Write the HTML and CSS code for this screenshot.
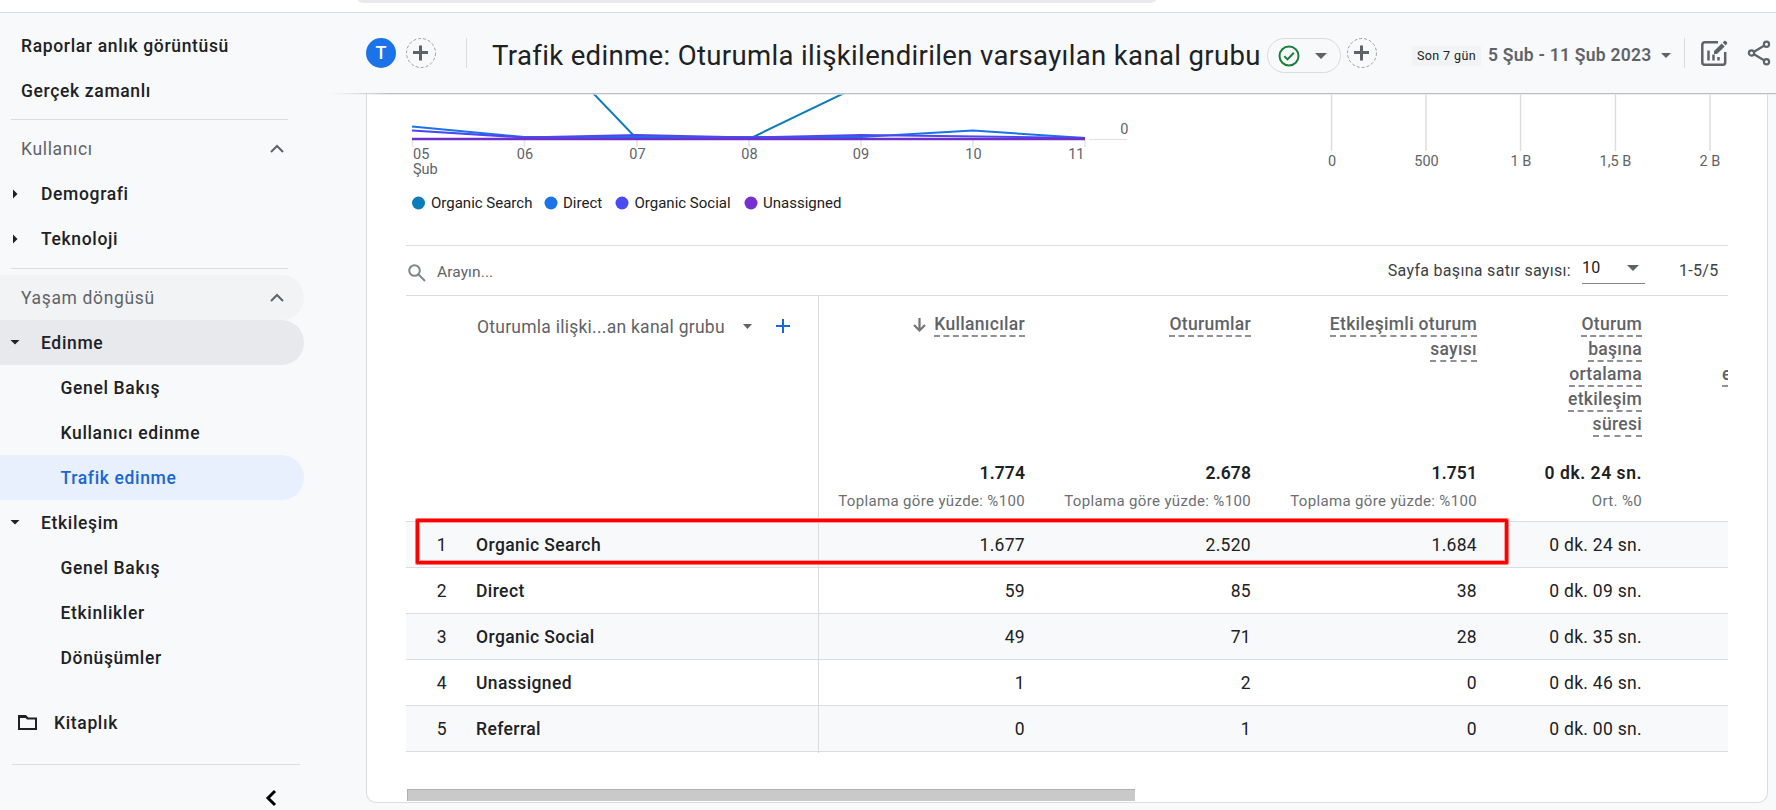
FILE: index.html
```html
<!DOCTYPE html>
<html lang="tr">
<head>
<meta charset="utf-8">
<title>Trafik edinme</title>
<link rel="stylesheet" href="styles.css">
</head>
<body>
<div class="topbar"><div class="topsearch"></div></div>
<div class="shell">
  <nav class="sidebar">
    <a class="item">Raporlar anlık görüntüsü</a>
    <a class="item">Gerçek zamanlı</a>
    <hr class="rule">
    <div class="item section">Kullanıcı<svg class="chev" width="14" height="9" viewBox="0 0 14 9"><path d="M1 8l6-6 6 6"/></svg></div>
    <a class="item group"><svg class="tri" width="10" height="10"><path d="M3 .5v9l4.500-4.500z"/></svg>Demografi</a>
    <a class="item group"><svg class="tri" width="10" height="10"><path d="M3 .5v9l4.500-4.500z"/></svg>Teknoloji</a>
    <hr class="rule second">
    <div class="item section hover">Yaşam döngüsü<svg class="chev" width="14" height="9" viewBox="0 0 14 9"><path d="M1 8l6-6 6 6"/></svg></div>
    <a class="item group open"><svg class="tri" width="10" height="10"><path d="M.5 2h9l-4.500 4.500z"/></svg>Edinme</a>
    <a class="item sub">Genel Bakış</a>
    <a class="item sub">Kullanıcı edinme</a>
    <a class="item sub active">Trafik edinme</a>
    <a class="item group"><svg class="tri" width="10" height="10"><path d="M.5 2h9l-4.500 4.500z"/></svg>Etkileşim</a>
    <a class="item sub">Genel Bakış</a>
    <a class="item sub">Etkinlikler</a>
    <a class="item sub">Dönüşümler</a>
    <a class="item library"><svg width="20" height="16" viewBox="0 0 20 16"><path d="M1 2h7l1.500 1.500H18V14H1z" fill="none" stroke="#202124" stroke-width="2"/><path d="M0 0h8l2.500 3H0z" fill="#202124"/></svg>Kitaplık</a>
    <hr class="rule foot">
    <svg class="collapse" width="12" height="18" viewBox="0 0 12 18"><path d="M10 2L3 9l7 7"/></svg>
  </nav>
  <div class="content">
    <header class="header">
      <span class="avatar">T</span>
      <svg class="add" width="30" height="30" viewBox="0 0 30 30"><circle cx="15" cy="15" r="14.500"/><path d="M14.500 7.500v15M7 14.500h15"/></svg>
      <span class="vsep first"></span>
      <h1 class="title">Trafik edinme: Oturumla ilişkilendirilen varsayılan kanal grubu</h1>
      <span class="status">
        <svg width="22" height="22" viewBox="0 0 22 22"><circle cx="11" cy="11" r="9.500"/><path d="M6.300 11.200l3.200 3.200 6.300-6.600"/></svg>
        <svg class="caret" width="12" height="6"><path d="M0 0h12L6 6z"/></svg>
      </span>
      <svg class="add second" width="30" height="30" viewBox="0 0 30 30"><circle cx="15" cy="15" r="14.500"/><path d="M14.500 7.500v15M7 14.500h15"/></svg>
      <span class="chip">Son 7 gün</span>
      <span class="date">5 Şub - 11 Şub 2023</span>
      <svg class="caret datecaret" width="10" height="5"><path d="M0 0h10L5 5z"/></svg>
      <span class="vsep second"></span>
      <svg class="report" width="27" height="27" viewBox="0 0 27 27"><path d="M17 2.300H4Q1.300 2.300 1.300 5v17.500q0 2.200 2.200 2.200h18.500q2.200 0 2.200-2.200V12" fill="none" stroke="#5f6368" stroke-width="2.500"/><path d="M7.500 10.500v10M12.500 14.500v6M17.500 17v3.500" stroke="#5f6368" stroke-width="2.500"/><path d="M13 11L20.700 3.500l3 3L16 14h-3zM21.700 2.500L23.200 1q.8-.6 1.500 0L26 2.300q.7.700 0 1.500L24.600 5.400z" fill="#5f6368"/></svg>
      <svg class="share" width="24" height="26" viewBox="0 0 24 26"><g fill="none" stroke="#5f6368" stroke-width="2.200"><circle cx="4.500" cy="13" r="2.600"/><circle cx="19.500" cy="4.300" r="2.600"/><circle cx="19.500" cy="21.700" r="2.600"/><path d="M7 11.700l10-5.900M7 14.300l10 5.900"/></g></svg>
    </header>
    <main class="card">
      <svg class="charts" width="1400" height="151" viewBox="367 93 1400 151">
        <path d="M1089 139.500h38" stroke="#e0e0e0"/>
        <path d="M412.500 140v7M524.500 140v7M637 140v7M749 140v7M861 140v7M973 140v7M1085 140v7" stroke="#e4e4e6" stroke-width="1.500"/>
        <path d="M1331.500 93v58M1426 93v58M1520.500 93v58M1615.500 93v58M1710 93v58" stroke="#dadce0" stroke-width="1.400"/>
        <g fill="none" stroke-width="2">
          <path d="M524 21L637 139H749L861 85" stroke="#0c7db8"/>
          <path d="M412 126.500L524 137H861L973 130.500 1085 138" stroke="#1a73e8"/>
          <path d="M412 130.500L524 137.500 637 135 749 137.500 861 135 1085 138" stroke="#4b49f0"/>
          <path d="M412 139H1085" stroke="#6f2fc9" stroke-width="2.600"/>
        </g>
        <g class="axis">
          <text x="413" y="159">05</text><text x="413" y="174">Şub</text>
          <g text-anchor="middle"><text x="525" y="159">06</text><text x="637.500" y="159">07</text><text x="749.500" y="159">08</text><text x="861" y="159">09</text><text x="973.500" y="159">10</text></g>
          <g text-anchor="end"><text x="1084.500" y="159">11</text><text x="1128.500" y="134">0</text></g>
          <g text-anchor="middle"><text x="1332" y="166">0</text><text x="1426.500" y="166">500</text><text x="1521" y="166">1 B</text><text x="1615.500" y="166">1,5 B</text><text x="1710" y="166">2 B</text></g>
        </g>
        <g class="legend">
          <circle cx="418.500" cy="203" r="6.500" fill="#0c7db8"/><text x="431" y="208">Organic Search</text>
          <circle cx="551" cy="203" r="6.500" fill="#1a73e8"/><text x="563" y="208">Direct</text>
          <circle cx="622" cy="203" r="6.500" fill="#4b49f0"/><text x="634.500" y="208">Organic Social</text>
          <circle cx="751" cy="203" r="6.500" fill="#7630cf"/><text x="763" y="208">Unassigned</text>
        </g>
      </svg>
      <section class="report-table">
        <div class="tools">
          <svg class="lens" width="18" height="18" viewBox="0 0 18 18"><circle cx="6.500" cy="6.500" r="5.300"/><path d="M10.500 10.500l6.500 6.500"/></svg>
          <span class="find">Arayın...</span>
          <span class="perpage">Sayfa başına satır sayısı:</span>
          <span class="select">10<svg class="caret" width="12" height="6"><path d="M0 0h12L6 6z"/></svg></span>
          <span class="range">1-5/5</span>
        </div>
        <div class="row head">
          <div class="dim"><span>Oturumla ilişki...an kanal grubu</span><svg class="caret" width="9" height="5"><path d="M0 0h9L4.500 5z"/></svg><svg class="plus" width="14" height="14"><path d="M7 0v14M0 7h14"/></svg></div>
          <div class="th"><svg class="sort" width="13" height="14" viewBox="0 0 13 14"><path d="M6.500 0v12M1 7l5.500 5.500L12 7"/></svg><span>Kullanıcılar</span></div>
          <div class="th"><span>Oturumlar</span></div>
          <div class="th"><span>Etkileşimli oturum</span><br><span>sayısı</span></div>
          <div class="th time"><span>Oturum</span><br><span>başına</span><br><span>ortalama</span><br><span>etkileşim</span><br><span>süresi</span></div>
          <div class="th next"><span>e</span></div>
          <div class="total c2"><b>1.774</b><small>Toplama göre yüzde: %100</small></div>
          <div class="total"><b>2.678</b><small>Toplama göre yüzde: %100</small></div>
          <div class="total"><b>1.751</b><small>Toplama göre yüzde: %100</small></div>
          <div class="total time"><b>0 dk. 24 sn.</b><small>Ort. %0</small></div>
        </div>
        <div class="row shade"><div class="name"><i>1</i>Organic Search</div><div>1.677</div><div>2.520</div><div>1.684</div><div class="time">0 dk. 24 sn.</div><span class="marker"></span></div>
        <div class="row"><div class="name"><i>2</i>Direct</div><div>59</div><div>85</div><div>38</div><div class="time">0 dk. 09 sn.</div></div>
        <div class="row shade"><div class="name"><i>3</i>Organic Social</div><div>49</div><div>71</div><div>28</div><div class="time">0 dk. 35 sn.</div></div>
        <div class="row"><div class="name"><i>4</i>Unassigned</div><div>1</div><div>2</div><div>0</div><div class="time">0 dk. 46 sn.</div></div>
        <div class="row shade"><div class="name"><i>5</i>Referral</div><div>0</div><div>1</div><div>0</div><div class="time">0 dk. 00 sn.</div></div>
        <div class="scrollbar"></div>
      </section>
    </main>
  </div>
</div>
</body>
</html>
```
FILE: styles.css
```css
* { box-sizing: border-box; }
body { margin: 0; width: 1776px; height: 810px; overflow: hidden; background: #f8f9fb; color: #202124; font: 400 17.5px Roboto, sans-serif; }
svg { display: block; flex: none; }

.topbar { height: 13px; background: #fff; border-bottom: 1px solid #dadce0; padding-left: 358px; }
.topsearch { width: 798px; height: 3px; background: #e9eaee; border-radius: 0 0 6px 6px / 0 0 3px 3px; }
.shell { display: flex; height: 797px; }

.sidebar { width: 330px; flex: none; padding-top: 10px; }
.item { display: flex; align-items: center; width: 304px; height: 45px; padding-left: 21px; border-radius: 0 22.5px 22.5px 0; font-weight: 500; letter-spacing: .65px; }
.section { color: #5f6368; font-weight: 400; justify-content: space-between; padding-right: 20px; }
.chev { fill: none; stroke: #5f6368; stroke-width: 2; }
.group { padding-left: 10px; gap: 21px; }
.tri { fill: #202124; }
.sub { padding-left: 60.5px; }
.hover { background: #f1f3f4; }
.open { background: #e8e9ed; }
.active { background: #e8effd; color: #1967d2; }
.rule { width: 277px; height: 1px; margin: 6px 0 6px 11px; border: 0; background: #dadce0; }
.rule.second { margin-top: 7px; }
.library { margin-top: 20px; padding-left: 18px; gap: 16px; }
.rule.foot { width: 288px; margin: 19px 0 0 12px; }
.collapse { margin: 24px 0 0 265px; fill: none; stroke: #000; stroke-width: 3; }

.content { flex: 1; min-width: 0; display: flex; flex-direction: column; }
.header { position: relative; display: flex; align-items: flex-start; height: 80px; flex: none; padding: 25px 0 0 36px; }
.header::after { content: ""; position: absolute; left: 0; right: 0; top: 80px; height: 2px; background: linear-gradient(#bdbfc3 0 1px, #e2e3e5aa 1px); mask-image: linear-gradient(90deg, transparent, #000 60px); }
.avatar { width: 30px; height: 30px; border-radius: 50%; background: #1a73e8; color: #fff; text-align: center; font-weight: 500; line-height: 30px; font-size: 18px; }
.add { margin-left: 10px; fill: none; stroke: #5f6368; stroke-width: 3; }
.add circle { stroke: #9aa0a6; stroke-width: 1; stroke-dasharray: 3 2; }
.add.second { margin-left: 6px; }
.vsep { width: 1px; height: 30px; background: #dadce0; }
.vsep.first { margin-left: 30px; }
.vsep.second { margin-left: 13px; }
.title { width: 775px; margin: 0 0 0 25px; font-size: 27.5px; font-weight: 400; line-height: 36px; letter-spacing: .36px; white-space: nowrap; }
.status { display: flex; align-items: center; width: 74px; height: 35px; padding-left: 10px; gap: 15px; border: 1px solid #dadce0; border-radius: 18px; }
.status svg { fill: none; stroke: #188038; stroke-width: 2; }
.caret, .status .caret { fill: #5f6368; stroke: none; }
.chip { width: 69px; height: 20px; margin: 8px 0 0 35px; background: #f1f3f4; font-size: 12.5px; line-height: 20px; letter-spacing: .4px; text-align: center; white-space: nowrap; }
.date { width: 172px; margin-left: 7px; margin-right: 1px; color: #5f6368; font-weight: 600; line-height: 35px; letter-spacing: .25px; white-space: nowrap; }
.datecaret { margin-top: 15px; }
.report { margin: 2px 0 0 16px; }
.share { margin: 2px 0 0 19px; }

.card { width: 1402px; height: 710px; margin-left: 36px; background: #fff; border: 1px solid #dadce0; border-top: 0; border-radius: 0 0 10px 10px; }
.charts text { font-size: 15px; }
.charts .axis text { font-size: 14.5px; }
.axis { fill: #5f6368; }
.legend { fill: #202124; }

.report-table { margin-left: 39px; width: 1322px; margin-top: 1px; }
.tools { display: flex; height: 51px; border: solid #dadce0; border-width: 1px 0; font-size: 16px; letter-spacing: .3px; color: #3c4043; line-height: 50px; }
.lens { margin: 18px 0 0 2px; fill: none; stroke: #80868b; stroke-width: 2; }
.find { margin-left: 11px; font-size: 15.5px; color: #5f6368; letter-spacing: .1px; line-height: 52px; }
.perpage { margin-left: auto; }
.select { display: flex; justify-content: space-between; align-items: center; width: 63px; height: 32px; margin: 6px 0 0 11px; padding: 0 6px 0 0; border-bottom: 1px solid #80868b; color: #202124; line-height: 32px; }
.range { width: 49px; margin-left: 34px; }

.row { position: relative; display: grid; grid-template-columns: 413px 206px 226px 226px 164px 87px; height: 46px; border-bottom: 1px solid #dadce0; line-height: 47px; text-align: right; letter-spacing: .3px; }
.row .time { margin-right: -1px; }
.shade { background: #f8f9fb; }
.name { display: flex; gap: 29px; padding-left: 29px; border-right: 1px solid #dadce0; font-weight: 500; letter-spacing: .4px; }
.name i { width: 12px; font-style: normal; font-weight: 400; }
.head { height: 226px; grid-template-rows: 152px 73px; line-height: 25px; }
.dim { grid-row: 1 / 3; display: flex; padding: 19px 0 0 71px; border-right: 1px solid #dadce0; color: #5f6368; letter-spacing: .25px; }
.dim .caret { margin: 9px 0 0 18px; }
.plus { margin: 4px 0 0 24px; stroke: #1967d2; stroke-width: 2; }
.th { padding-top: 16px; color: #5f6368; font-weight: 500; white-space: nowrap; }
.th span { padding-bottom: 1px; border-bottom: 2px dashed #8d9196; }
.sort { display: inline-block; margin-right: 8px; vertical-align: -2px; fill: none; stroke: #757575; stroke-width: 2.2; }
.next { padding: 66px 0 0 81px; text-align: left; overflow: hidden; }
.total { display: flex; flex-direction: column; padding-top: 13px; }
.total.c2 { grid-column: 2; }
.total b { font-weight: 600; letter-spacing: .1px; }
.total.time b { letter-spacing: .55px; }
.total small { font-size: 15px; color: #6b6f74; line-height: 30px; letter-spacing: .35px; }
.marker { position: absolute; left: 9.5px; top: -3px; width: 1092px; height: 45px; border: 3px solid #f00; box-shadow: 0 0 0 1px #ff7474, inset 0 0 0 1px #ff9c9c; border-radius: 1px; }
.scrollbar { width: 728px; height: 12px; margin: 37px 0 0 1px; background: #c9c9c9; border: solid #b0b0b0; border-width: 1px 0 0 1px; }
```
